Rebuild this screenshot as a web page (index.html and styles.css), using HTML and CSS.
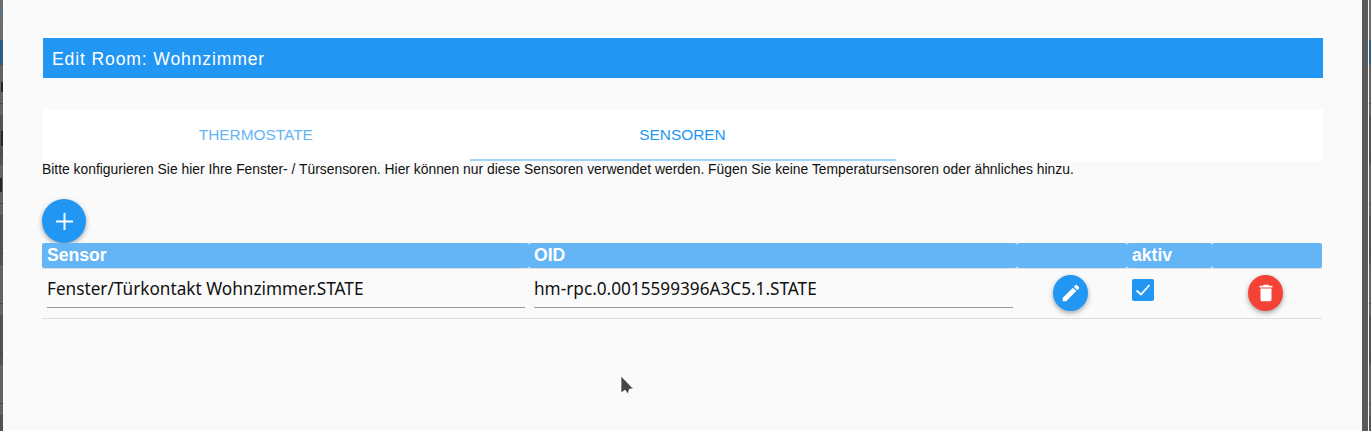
FILE: index.html
```html
<!DOCTYPE html>
<html lang="de">
<head>
<meta charset="utf-8">
<title>Edit Room</title>
<link rel="stylesheet" href="styles.css">
</head>
<body>
<div class="screen">
  <div class="backdrop backdrop-left stripes">
    <div class="strip-top strip-top-dashes"></div>
    <div class="strip-blue"></div>
    <span class="sliver sliver-n"></span>
    <span class="sliver sliver-g"></span>
    <span class="sliver sliver-l"></span>
  </div>
  <main class="dialog">
    <h1 class="title">Edit Room: Wohnzimmer</h1>
    <nav class="tabs">
      <div class="tab">THERMOSTATE</div>
      <div class="tab tab-active">SENSOREN</div>
      <div class="tab"></div>
    </nav>
    <p class="hint">Bitte konfigurieren Sie hier Ihre Fenster- / Türsensoren. Hier können nur diese Sensoren verwendet werden. Fügen Sie keine Temperatursensoren oder ähnliches hinzu.</p>
    <button class="fab fab-add" aria-label="add">
      <svg viewBox="0 0 24 24" width="29" height="29"><path fill="#fff" d="M19 12.800h-6.200V19h-1.600v-6.200H5v-1.600h6.200V5h1.600v6.200H19v1.600z"/></svg>
    </button>
    <div class="table">
      <div class="thead">
        <div class="th">Sensor</div>
        <div class="th">OID</div>
        <div class="th"></div>
        <div class="th">aktiv</div>
        <div class="th"></div>
      </div>
      <div class="tr">
        <div class="td"><div class="field">Fenster/Türkontakt Wohnzimmer.STATE</div></div>
        <div class="td"><div class="field">hm-rpc.0.0015599396A3C5.1.STATE</div></div>
        <div class="td td-center">
          <button class="fab fab-small" aria-label="edit">
            <svg viewBox="0 0 24 24" width="22" height="22"><path fill="#fff" d="M3 17.250V21h3.750L17.810 9.940l-3.750-3.750L3 17.250zM20.710 7.040a1 1 0 0 0 0-1.410l-2.340-2.340a1 1 0 0 0-1.410 0l-1.830 1.830 3.750 3.750 1.830-1.830z"/></svg>
          </button>
        </div>
        <div class="td td-check">
          <span class="checkbox">
            <svg viewBox="0 0 22 22" width="22" height="22"><path fill="none" stroke="#fff" stroke-width="1.800" d="M4.500 11.500l4.500 4 8.500-9.500"/></svg>
          </span>
        </div>
        <div class="td td-center">
          <button class="fab fab-small fab-red" aria-label="delete">
            <svg viewBox="0 0 24 24" width="22" height="22"><path fill="#fff" d="M6 19c0 1.100.9 2 2 2h8c1.100 0 2-.9 2-2V7H6v12zM19 4h-3.500l-1-1h-5l-1 1H5v2h14V4z"/></svg>
          </button>
        </div>
      </div>
    </div>
    <svg class="cursor" viewBox="0 0 15 21" width="15" height="21"><path fill="#444" stroke="#fff" stroke-opacity=".7" d="M1 1v17l4-3 3 4 1.500-5H13.500z"/></svg>
  </main>
  <div class="backdrop backdrop-right">
    <div class="strip-gap"></div>
    <div class="strip-edge stripes">
      <div class="strip-top"></div>
      <div class="strip-blue"></div>
    </div>
  </div>
</div>
</body>
</html>
```
FILE: styles.css
```css
* { box-sizing: border-box; }
html, body { margin: 0; padding: 0; }
body { font-family: "Liberation Sans", Arial, sans-serif; background: #5c5c5c; overflow: hidden; }
.screen { display: flex; width: 1371px; height: 431px; overflow: hidden; }
.backdrop { position: relative; flex: none; }
.backdrop-left { width: 3px; overflow: hidden; }
.backdrop-right { width: 9px; display: flex; padding-left: 6px; background: #5a5a5a; }
.stripes {
  background:
    repeating-linear-gradient(to bottom, transparent 0 3px, #454545 3px 4px, transparent 4px 50px),
    repeating-linear-gradient(to bottom, #636363 0 15px, #525252 15px 65px, #636363 65px 100px);
}
.strip-gap { width: 1px; background: #f4f4f4; flex: none; }
.strip-edge { flex: 1; }
.strip-top { height: 40px; background: #6c6c6c; }
.strip-top-dashes {
  background:
    linear-gradient(#3f7fb0, #3f7fb0) 0 8px / 2px 1px no-repeat,
    linear-gradient(#3f7fb0, #3f7fb0) 0 12px / 2px 1px no-repeat,
    linear-gradient(#3f7fb0, #3f7fb0) 0 17px / 2px 1px no-repeat,
    #6c6c6c;
}
.strip-blue { height: 25px; background: #2d5f86; }
.sliver { position: absolute; left: 1px; width: 2px; background: #262626; }
.sliver-n { top: 82px; height: 10px; }
.sliver-g { top: 131px; height: 15px; }
.sliver-l { top: 178px; left: 0; height: 14px; }
.dialog { flex: 1; position: relative; background: #fafafa; padding: 38px 39px 0 40px; }
.title { margin: 0; height: 40px; padding-left: 9px; background: #2196f3; color: #fff; font-size: 17.600px; font-weight: 400; letter-spacing: .85px; line-height: 42px; }
.tabs { display: flex; height: 52px; margin-top: 31px; background: #fff; }
.tab { flex: 1; padding: 17px 1px 0 0; text-align: center; font-size: 15.400px; line-height: 18px; color: #64b5f6; }
.tab-active { color: #2196f3; box-shadow: inset 0 -2px 0 #a6d5fa; }
.hint { margin: 0 0 0 -1px; height: 38px; font-size: 13.870px; line-height: 16px; color: #111; }
.fab { display: flex; align-items: center; justify-content: center; padding: 0; border: 0; border-radius: 50%; background: #2196f3; box-shadow: 0 2px 5px rgba(0, 0, 0, .35); }
.fab-add { width: 44px; height: 44px; margin-left: -1px; }
.fab-small { width: 35px; height: 36px; }
.fab-red { background: #f44336; }
.table { margin-left: -1px; width: 1280px; }
.thead, .tr { display: grid; grid-template-columns: 487px 488px 110px 85px 110px; }
.thead { height: 25px; box-shadow: 0 1px 0 #e0e0e0; }
.th { padding-left: 5px; border-radius: 2px; background: #64b5f6; color: #fff; font-size: 17.600px; font-weight: 700; line-height: 24px; }
.tr { height: 50px; margin-top: 1px; border-bottom: 1px solid #ddd; }
.td { position: relative; padding: 0 4px 0 5px; }
.field { height: 39px; padding-top: 8px; border-bottom: 1px solid #999; font-family: "Noto Sans", sans-serif; font-size: 17.200px; line-height: 24px; color: #111; white-space: nowrap; }
.td-center { display: flex; justify-content: center; padding: 6px 3px 0 0; }
.td-check { padding-top: 10px; }
.checkbox { display: block; width: 22px; height: 22px; border-radius: 2px; background: #2196f3; }
.checkbox svg { display: block; }
.cursor { position: absolute; left: 617px; top: 375px; }
```
